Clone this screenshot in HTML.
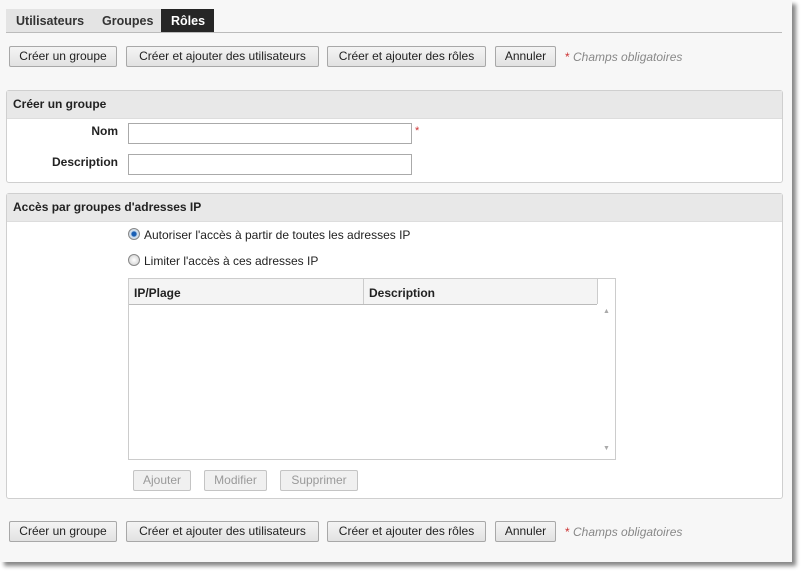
<!DOCTYPE html>
<html><head><meta charset="utf-8"><style>
body{margin:0;width:808px;height:575px;background:#fff;position:relative;overflow:hidden;font-family:"Liberation Sans",Arial,sans-serif;font-size:12px;color:#222}
.page{position:absolute;left:0;top:0;width:792px;height:562px;background:#f7f7f7;box-shadow:4px 4px 4px #888}
.a{position:absolute}
.btn{position:absolute;height:19px;border:1px solid #a8a8a8;background:linear-gradient(#f4f4f4,#e2e2e2);border-radius:2px;text-align:center;line-height:19px;font-size:12px;color:#222;box-sizing:content-box}
.dis{color:#999;border-color:#c4c4c4;background:#f0f0f0}
.req{position:absolute;font-size:12px;color:#888;font-style:italic}
.req b{color:#c33;font-style:normal;font-weight:normal}
.sec{position:absolute;left:6px;width:775px;border:1px solid #cfcfcf;border-radius:3px;background:#fff}
.sh{height:27px;background:#e8e8e8;font-weight:bold;line-height:27px;padding-left:6px;border-bottom:1px solid #ddd}
.inp{position:absolute;height:19px;border:1px solid #aaa;background:#fff}
.lbl{position:absolute;font-weight:bold;text-align:right;width:100px}
.radio{position:absolute;width:10px;height:10px;border-radius:50%;border:1px solid #888;background:radial-gradient(#fff,#ccc)}
</style></head><body><div class="page">
<div class="a" style="left:6px;top:9px;width:155px;height:24px;background:#e4e4e4"></div>
<div class="a" style="left:161px;top:9px;width:53px;height:24px;background:#262626"></div>
<div class="a" style="left:6px;top:32px;width:776px;height:1px;background:#bbb"></div>
<div class="a" style="left:16px;top:14px;font-weight:bold;color:#333;font-size:12.5px">Utilisateurs</div>
<div class="a" style="left:102px;top:14px;font-weight:bold;color:#333;font-size:12.5px">Groupes</div>
<div class="a" style="left:171px;top:14px;font-weight:bold;color:#fff;font-size:12.5px">Rôles</div>

<div class="btn" style="left:9px;top:46px;width:106px">Créer un groupe</div>
<div class="btn" style="left:126px;top:46px;width:191px">Créer et ajouter des utilisateurs</div>
<div class="btn" style="left:327px;top:46px;width:157px">Créer et ajouter des rôles</div>
<div class="btn" style="left:495px;top:46px;width:59px">Annuler</div>
<div class="req" style="left:565px;top:50px"><b>*</b> Champs obligatoires</div>

<div class="sec" style="top:90px;height:91px"><div class="sh">Créer un groupe</div></div>
<div class="lbl" style="left:18px;top:124px">Nom</div>
<div class="inp" style="left:128px;top:123px;width:282px"></div>
<div class="a" style="left:415px;top:125px;color:#c33;font-size:11px">*</div>
<div class="lbl" style="left:18px;top:155px">Description</div>
<div class="inp" style="left:128px;top:154px;width:282px"></div>

<div class="sec" style="top:193px;height:304px"><div class="sh">Accès par groupes d'adresses IP</div></div>
<div class="radio" style="left:128px;top:228px;background:radial-gradient(#1a5fb4 30%,#cde 45%,#ddd)"></div>
<div class="a" style="left:144px;top:228px">Autoriser l'accès à partir de toutes les adresses IP</div>
<div class="radio" style="left:128px;top:254px"></div>
<div class="a" style="left:144px;top:254px">Limiter l'accès à ces adresses IP</div>
<div class="a" style="left:128px;top:278px;width:486px;height:180px;border:1px solid #ccc;background:#fff"></div>
<div class="a" style="left:129px;top:279px;width:468px;height:25px;background:#f4f4f4;border-bottom:1px solid #bbb"></div>
<div class="a" style="left:363px;top:279px;width:1px;height:25px;background:#ccc"></div>
<div class="a" style="left:597px;top:279px;width:1px;height:25px;background:#ccc"></div>
<div class="a" style="left:134px;top:286px;font-weight:bold">IP/Plage</div>
<div class="a" style="left:369px;top:286px;font-weight:bold">Description</div>
<div class="a" style="left:603px;top:308px;font-size:7px;color:#aaa">▲</div>
<div class="a" style="left:603px;top:445px;font-size:7px;color:#aaa">▼</div>
<div class="btn dis" style="left:133px;top:470px;width:56px">Ajouter</div>
<div class="btn dis" style="left:204px;top:470px;width:61px">Modifier</div>
<div class="btn dis" style="left:280px;top:470px;width:76px">Supprimer</div>

<div class="btn" style="left:9px;top:521px;width:106px">Créer un groupe</div>
<div class="btn" style="left:126px;top:521px;width:191px">Créer et ajouter des utilisateurs</div>
<div class="btn" style="left:327px;top:521px;width:157px">Créer et ajouter des rôles</div>
<div class="btn" style="left:495px;top:521px;width:59px">Annuler</div>
<div class="req" style="left:565px;top:525px"><b>*</b> Champs obligatoires</div>
</div></body></html>
